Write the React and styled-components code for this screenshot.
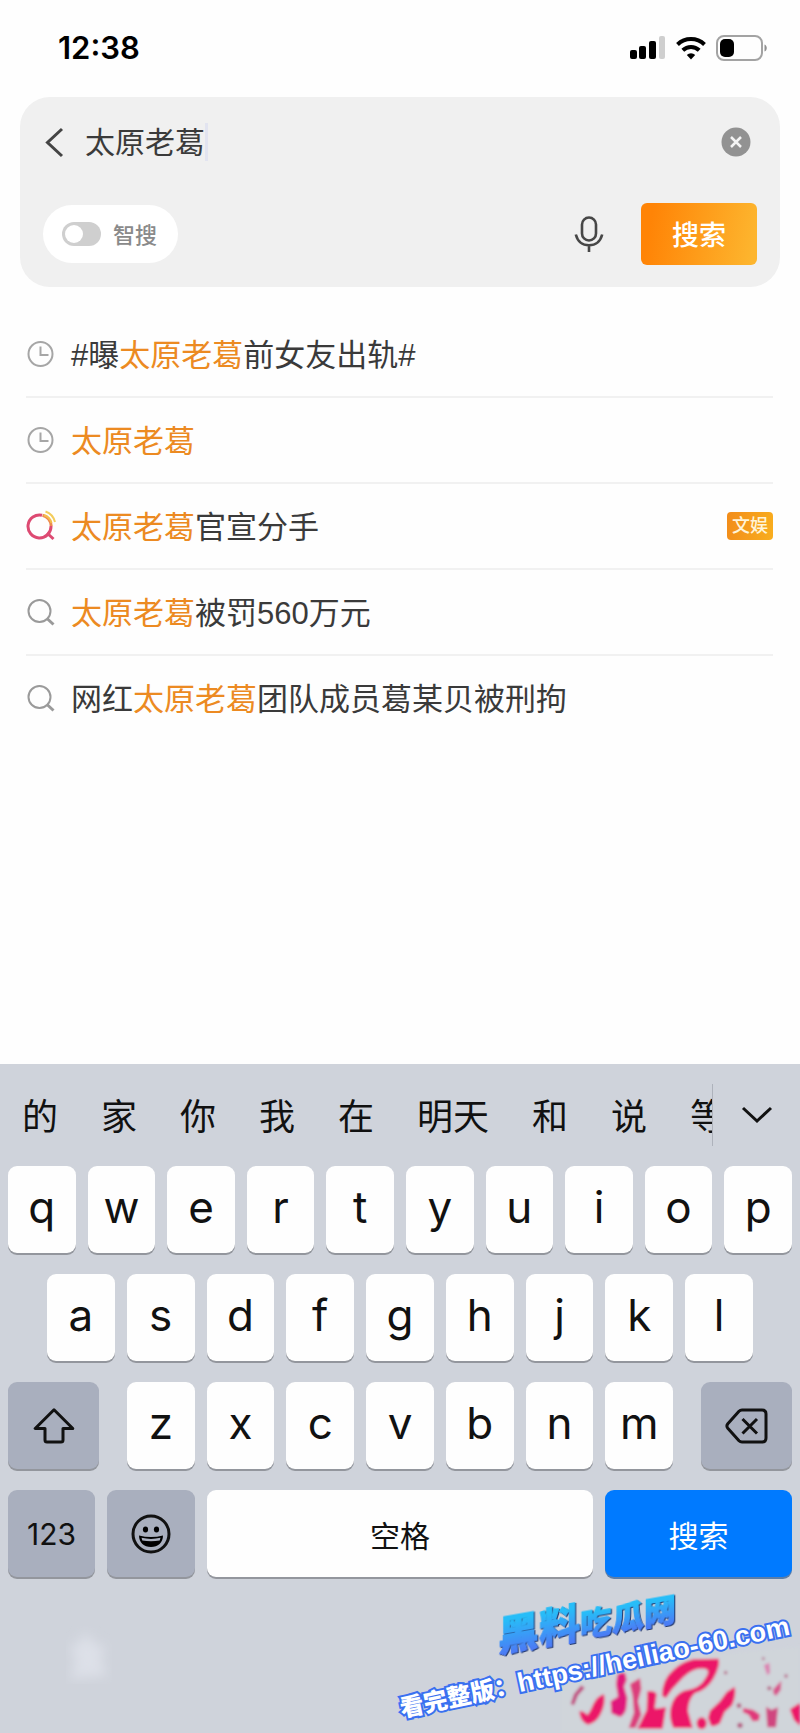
import { useState } from 'react';
import styled, { createGlobalStyle } from 'styled-components';

const GlobalStyle = createGlobalStyle`
  * {
    box-sizing: border-box;
  }

  body {
    margin: 0;
    background: #fefefe;
    color: #3a3a3a;
    font-family: Inter, 'Noto Sans CJK SC', sans-serif;
  }

  button,
  input {
    margin: 0;
    padding: 0;
    border: none;
    background: none;
    color: inherit;
    font: inherit;
  }

  button {
    cursor: pointer;
  }

  svg {
    display: block;
    flex-shrink: 0;
  }
`;

const Page = styled.div`
  display: flex;
  flex-direction: column;
  min-height: 100vh;
`;

const StatusBar = styled.header`
  display: flex;
  align-items: center;
  justify-content: space-between;
  height: 97px;
  padding: 0 32px 2px 58px;
  color: #000;
`;

const Time = styled.time`
  font-size: 31px;
  font-weight: 600;
`;

const StatusIcons = styled.div`
  display: flex;
  align-items: center;
  gap: 10px;
`;

const SearchCard = styled.form`
  display: flex;
  flex-direction: column;
  justify-content: space-between;
  height: 190px;
  margin: 0 20px;
  padding: 20px 23px 22px;
  border-radius: 30px;
  background: #f0f0f0;
`;

const CardRow = styled.div`
  display: flex;
  align-items: center;
`;

const BackButton = styled.button`
  width: 42px;
`;

const SearchInput = styled.input`
  field-sizing: content;
  min-width: 30px;
  height: 50px;
  padding-bottom: 4px;
  outline: none;
  font-size: 30px;
`;

const Caret = styled.span`
  width: 3px;
  height: 38px;
  background: #e2e4f0;
`;

const ClearButton = styled.button`
  margin: 0 6px 0 auto;
`;

const SmartToggle = styled.label`
  display: flex;
  align-items: center;
  gap: 12px;
  height: 58px;
  padding: 0 21px 0 19px;
  border-radius: 29px;
  background: #fff;
  color: #8a8a8a;
  font-size: 22px;
  font-weight: 500;
`;

const SmartLabel = styled.span`
  padding-bottom: 3px;
`;

const Switch = styled.input`
  appearance: none;
  display: flex;
  align-items: center;
  width: 39px;
  height: 24px;
  padding: 0 3px;
  border-radius: 12px;
  background: #cfcfcf;

  &::before {
    content: '';
    width: 18px;
    height: 18px;
    border-radius: 50%;
    background: #fff;
  }

  &:checked {
    justify-content: flex-end;
    background: #ff8a0c;
  }
`;

const MicButton = styled.button`
  margin: 0 37px 0 auto;
`;

const SubmitButton = styled.button`
  width: 116px;
  height: 62px;
  padding-bottom: 2px;
  border-radius: 6px;
  background: linear-gradient(100deg, #ff8406 10%, #fdb52e 95%);
  color: #fff;
  font-size: 27px;
  font-weight: 500;
`;

const List = styled.ul`
  flex: 1;
  margin: 0;
  padding: 25px 27px 0 26px;
  list-style: none;
`;

const Item = styled.li`
  &:not(:last-child) {
    border-bottom: 2px solid #f1f1f1;
  }
`;

const Suggestion = styled.button`
  display: flex;
  align-items: center;
  width: 100%;
  height: 84px;
  font-family: 'Liberation Sans', 'Noto Sans CJK SC', sans-serif;
  font-size: 31px;
  text-align: left;
  white-space: nowrap;
`;

const IconSlot = styled.span`
  width: 45px;
`;

const SuggestionText = styled.span`
  padding-bottom: 4px;
`;

const Mark = styled.em`
  color: #ec8a22;
  font-style: normal;
`;

const Tag = styled.span`
  margin-left: auto;
  padding: 0 5px;
  border-radius: 4px;
  background: linear-gradient(100deg, #f28c1a, #f9ae1e);
  color: #fff4d8;
  font-size: 18px;
  font-weight: 500;
  line-height: 28px;
`;

const Keyboard = styled.section`
  position: relative;
  padding-bottom: 156px;
  overflow: hidden;
  background: #cfd3db;
  color: #111;
`;

const CandidateBar = styled.div`
  display: flex;
  align-items: center;
  height: 102px;
`;

const Candidates = styled.div`
  display: flex;
  flex: 1;
  align-items: center;
  gap: 43px;
  min-width: 0;
  height: 62px;
  padding: 0 0 2px 22px;
  border-right: 1px solid #aeb2bb;
  overflow: hidden;
`;

const Candidate = styled.button`
  flex-shrink: 0;
  font-size: 36px;
`;

const ExpandButton = styled.button`
  display: flex;
  justify-content: center;
  width: 87px;
`;

const Keys = styled.div`
  display: flex;
  flex-direction: column;
  gap: 21px;
`;

const KeyRow = styled.div`
  display: flex;
  gap: ${({ $gap = 12 }) => $gap}px;
  padding: 0 ${({ $inset = 8 }) => $inset}px;
`;

const LetterGroup = styled.div`
  display: flex;
  flex: 1;
  gap: 12px;
`;

const Key = styled.button`
  display: flex;
  flex: ${({ $width }) => ($width ? `0 0 ${$width}px` : '1 1 0')};
  align-items: center;
  justify-content: center;
  min-width: 0;
  height: 87px;
  border-radius: 9px;
  background: #fefefe;
  box-shadow: 0 2px 0 #93969d;
  font-size: 30px;
`;

const LetterKey = styled(Key)`
  padding-bottom: 6px;
  font-size: 44px;
`;

const GreyKey = styled(Key)`
  background: #a9afbe;
`;

const BlueKey = styled(Key)`
  background: #007aff;
  box-shadow: 0 2px 0 #5c7ea8;
  color: #fff;
`;

const Smudge = styled.svg`
  position: absolute;
  bottom: 40px;
  left: 50px;
`;

const Splash = styled.svg`
  position: absolute;
  right: 0;
  bottom: 0;
`;

const Brand = styled.div`
  position: absolute;
  right: 124px;
  bottom: 86px;
  transform: skewY(-10deg);
  filter: drop-shadow(1px 1px 0 #22376b);
  white-space: nowrap;
`;

const BrandText = styled.span`
  background: linear-gradient(#27bdf8 20%, #4b7cf5 85%);
  background-clip: text;
  color: transparent;
  font-size: ${({ $size }) => $size}px;
  font-weight: 900;
  line-height: 44px;
  -webkit-text-stroke: 1px transparent;
`;

const SiteLink = styled.a`
  position: absolute;
  right: 6px;
  bottom: 47px;
  transform: rotate(-12deg);
  color: #fff;
  font-family: 'Liberation Sans', 'Noto Sans CJK SC', sans-serif;
  font-size: 27px;
  font-weight: 700;
  line-height: 36px;
  text-decoration: none;
  white-space: nowrap;
  paint-order: stroke fill;
  -webkit-text-stroke: 4px #3a70f0;
`;

const LinkLabel = styled.span`
  font-size: 24px;
  font-weight: 900;
`;

function SignalIcon() {
  return (
    <svg width="36" height="24" viewBox="0 0 36 24">
      <rect x="0" y="14" width="7" height="9" rx="2" />
      <rect x="9" y="10" width="7" height="13" rx="2" />
      <rect x="19" y="5" width="7" height="18" rx="2" />
      <rect x="29" y="0" width="6" height="23" rx="2" fill="#cfcfcf" />
    </svg>
  );
}

function WifiIcon() {
  return (
    <svg width="30" height="24" viewBox="0 0 30 24">
      <g fill="none" stroke="#000" strokeWidth="4">
        <path d="M1.5 8.5a19.5 19.5 0 0 1 27 0" />
        <path d="M6.8 14.2a11.8 11.8 0 0 1 16.4 0" />
      </g>
      <path d="M15 23.4l-4.2-4.4a6 6 0 0 1 8.4 0z" />
    </svg>
  );
}

function BatteryIcon() {
  return (
    <svg width="52" height="26" viewBox="0 0 52 26">
      <rect
        x="1"
        y="1"
        width="45"
        height="24"
        rx="7"
        fill="none"
        stroke="#a3a3a3"
        strokeWidth="2"
      />
      <rect x="4" y="4" width="14" height="18" rx="5" />
      <path d="M48.5 9.5c3 1 3 6 0 7z" fill="#8f8f8f" />
    </svg>
  );
}

function ClockIcon() {
  return (
    <svg width="30" height="28" viewBox="0 0 30 28" fill="none" stroke="#a6a6a6" strokeWidth="2">
      <circle cx="14.5" cy="14" r="12" />
      <path d="M14.5 6.500V15h8" />
    </svg>
  );
}

function SearchIcon() {
  return (
    <svg width="30" height="30" viewBox="0 0 30 30" fill="none" stroke="#9a9a9a" strokeWidth="2">
      <circle cx="13.5" cy="14" r="11" />
      <path d="M21 21.5l6.500 6" strokeWidth="3" />
    </svg>
  );
}

function HotSearchIcon() {
  return (
    <svg width="32" height="32" viewBox="0 0 32 32" fill="none" strokeWidth="3">
      <path d="M16 5.2A11.5 11.5 0 1 0 25 16" stroke="#dd4a72" />
      <path d="M21 23l6.500 6" stroke="#dd4a72" />
      <path d="M16.5 5.2A11.5 11.5 0 0 1 25.2 16" stroke="#ee8a4e" />
      <path d="M19.5 1.5a15 15 0 0 1 9.5 10.5" stroke="#f3cd5c" strokeWidth="2" />
      <path d="M18 5a11.5 11.5 0 0 1 7.5 8" stroke="#f3bd4c" strokeWidth="2" />
    </svg>
  );
}

function MicIcon() {
  return (
    <svg width="30" height="37" viewBox="0 0 30 37" fill="none" stroke="#474747" strokeWidth="2.6">
      <rect x="8" y="1.5" width="14" height="23" rx="7" />
      <path d="M1.8 18.5c2 7.5 7 10.8 13.2 10.8s11.2-3.3 13.2-10.8M15 29.5V36" />
    </svg>
  );
}

function ShiftIcon() {
  return (
    <svg width="42" height="36" viewBox="0 0 42 36" fill="none" stroke="#111" strokeWidth="3" strokeLinejoin="round">
      <path d="M21 1.8L2.2 20.5H12V32q0 2 2 2h14q2 0 2-2V20.5h9.8z" />
    </svg>
  );
}

function DeleteIcon() {
  return (
    <svg width="43" height="36" viewBox="0 0 43 36" fill="none" stroke="#111" strokeWidth="3" strokeLinejoin="round">
      <path d="M17 2h20q4 0 4 4v24q0 4-4 4H17q-1.8 0-3-1.2L2.8 20.2q-1.8-2.2 0-4.4L14 3.2Q15.2 2 17 2z" />
      <path d="M17.5 11L32 25.5M32 11L17.5 25.5" />
    </svg>
  );
}

function EmojiIcon() {
  return (
    <svg width="40" height="40" viewBox="0 0 40 40">
      <circle cx="20" cy="20" r="18" fill="none" stroke="#111" strokeWidth="3" />
      <ellipse cx="14.5" cy="15.5" rx="2.6" ry="3" />
      <ellipse cx="25.5" cy="15.5" rx="2.6" ry="3" />
      <path d="M8 21.5q12 3 24 0c0 7-5 11.5-12 11.5S8 28.500 8 21.5z" />
      <path d="M10.5 23.8q9.5 2.200 19 0l-.8 2.600q-8.700 1.600-17.400 0z" fill="#a9afbe" />
    </svg>
  );
}

function PaintSplash() {
  return (
    <Splash width="240" height="93" viewBox="0 0 720 279">
      <defs>
        <filter id="soft">
          <feGaussianBlur stdDeviation="4" />
        </filter>
      </defs>
      <g filter="url(#soft)" fill="#ec1468">
        <path d="M0 130L300 60 720 20V279H0z" fill="#d0d5da" opacity=".7" />
        <path d="M32 192l10-30 22-26 10 8-20 22-12 30z" fill="#c0497f" />
        <path d="M58 214q14-2 24 12 10-12 18-34 12-24 32-30 6 30-10 60-12 26-38 32-24-8-26-40z" />
        <path d="M172 104q14-10 24-4l4 20-8 20 10 34-4 36q-10 22-20 20l-24-10-2-36 22-14-6-38z" fill="#e0187c" />
        <path d="M210 132l30-18 4 32-10 38 10 40-18 40h-20l16-46-4-50z" fill="#dc3c7c" />
        <path d="M262 154q20-4 28 8l-6 44 34-4-10 64h-76l28-56z" />
        <path
          d="M306 168q0-50 34-78 24-24 60-32l76-2q6 20-16 60-20 34-56 44-20 20-20 54l14 50h-58q-14-30-8-60 8-40 40-52 48-4 66-40 14-24-4-26-34-4-64 26l-34 36-18 26z"
        />
        <path d="M450 212l30-28 20-28 24-16q6 24-8 56l-22 20-14 34q-18 14-28 6l-8-22z" />
        <ellipse cx="425" cy="250" rx="15" ry="18" />
        <path d="M550 204l30 6 20 14-4 18-18 2-12-20-18-8z" fill="#e0397a" />
        <path d="M640 148l24-26-2 28-14 18-8-8z" fill="#d8518a" />
        <path d="M618 200l16 10 20-8-6 60h-26z" fill="#d0457f" />
        <path d="M690 208l30-20v70l-18-18z" />
        <path d="M612 76l16-8 2 30-8 8z" fill="#dc7fb0" />
        <g fill="#b4567f">
          <circle cx="497" cy="98" r="5" />
          <circle cx="678" cy="108" r="5" />
          <circle cx="628" cy="145" r="6" />
          <circle cx="537" cy="197" r="7" />
          <circle cx="610" cy="56" r="4" />
          <circle cx="540" cy="256" r="8" />
          <circle cx="222" cy="84" r="6" />
        </g>
      </g>
    </Splash>
  );
}

const KEYWORD = '太原老葛';

const suggestions = [
  { icon: ClockIcon, before: '#曝', after: '前女友出轨#' },
  { icon: ClockIcon },
  { icon: HotSearchIcon, after: '官宣分手', tag: '文娱' },
  { icon: SearchIcon, after: '被罚560万元' },
  { icon: SearchIcon, before: '网红', after: '团队成员葛某贝被刑拘' }
];

const candidates = ['的', '家', '你', '我', '在', '明天', '和', '说', '等'];

function Letters({ letters, onType }) {
  return letters.split('').map((letter) => (
    <LetterKey key={letter} type="button" onClick={() => onType(letter)}>
      {letter}
    </LetterKey>
  ));
}

function App() {
  const [query, setQuery] = useState(KEYWORD);
  const [isSmart, setIsSmart] = useState(false);

  function handleType(text) {
    setQuery((value) => value + text);
  }

  return (
    <>
      <GlobalStyle />
      <Page>
        <StatusBar>
          <Time>12:38</Time>
          <StatusIcons>
            <SignalIcon />
            <WifiIcon />
            <BatteryIcon />
          </StatusIcons>
        </StatusBar>

        <SearchCard onSubmit={(e) => e.preventDefault()}>
          <CardRow>
            <BackButton type="button" aria-label="返回">
              <svg width="22" height="32" viewBox="0 0 22 32" fill="none" stroke="#444" strokeWidth="3">
                <path d="M19 3L4.5 16.5 19 30" />
              </svg>
            </BackButton>
            <SearchInput
              aria-label="搜索内容"
              value={query}
              onChange={(e) => setQuery(e.target.value)}
            />
            <Caret />
            <ClearButton type="button" aria-label="清除" onClick={() => setQuery('')}>
              <svg width="30" height="30" viewBox="0 0 30 30">
                <circle cx="15" cy="15" r="14.5" fill="#929292" />
                <path d="M10 10l10 10M20 10L10 20" stroke="#f4f4f4" strokeWidth="2.5" />
              </svg>
            </ClearButton>
          </CardRow>
          <CardRow>
            <SmartToggle>
              <Switch
                type="checkbox"
                checked={isSmart}
                onChange={() => setIsSmart((smart) => !smart)}
              />
              <SmartLabel>智搜</SmartLabel>
            </SmartToggle>
            <MicButton type="button" aria-label="语音输入">
              <MicIcon />
            </MicButton>
            <SubmitButton type="submit">搜索</SubmitButton>
          </CardRow>
        </SearchCard>

        <List>
          {suggestions.map(({ icon: Icon, before = '', after = '', tag }) => (
            <Item key={before + after}>
              <Suggestion
                type="button"
                onClick={() => setQuery(before + KEYWORD + after)}
              >
                <IconSlot>
                  <Icon />
                </IconSlot>
                <SuggestionText>
                  {before}
                  <Mark>{KEYWORD}</Mark>
                  {after}
                </SuggestionText>
                {tag && <Tag>{tag}</Tag>}
              </Suggestion>
            </Item>
          ))}
        </List>

        <Keyboard>
          <CandidateBar>
            <Candidates>
              {candidates.map((word) => (
                <Candidate key={word} type="button" onClick={() => handleType(word)}>
                  {word}
                </Candidate>
              ))}
            </Candidates>
            <ExpandButton type="button" aria-label="展开">
              <svg width="32" height="20" viewBox="0 0 32 20" fill="none" stroke="#111" strokeWidth="3">
                <path d="M2 3l14 13L30 3" />
              </svg>
            </ExpandButton>
          </CandidateBar>

          <Keys>
            <KeyRow>
              <Letters letters="qwertyuiop" onType={handleType} />
            </KeyRow>
            <KeyRow $inset={47}>
              <Letters letters="asdfghjkl" onType={handleType} />
            </KeyRow>
            <KeyRow $gap={28}>
              <GreyKey type="button" $width={91} aria-label="大写">
                <ShiftIcon />
              </GreyKey>
              <LetterGroup>
                <Letters letters="zxcvbnm" onType={handleType} />
              </LetterGroup>
              <GreyKey
                type="button"
                $width={91}
                aria-label="删除"
                onClick={() => setQuery((value) => value.slice(0, -1))}
              >
                <DeleteIcon />
              </GreyKey>
            </KeyRow>
            <KeyRow>
              <GreyKey type="button" $width={87}>
                123
              </GreyKey>
              <GreyKey type="button" $width={88} aria-label="表情">
                <EmojiIcon />
              </GreyKey>
              <Key type="button" onClick={() => handleType(' ')}>
                空格
              </Key>
              <BlueKey type="button" $width={187}>
                搜索
              </BlueKey>
            </KeyRow>
          </Keys>

          <Smudge width="76" height="76" viewBox="0 0 76 76">
            <filter id="haze">
              <feGaussianBlur stdDeviation="6" />
            </filter>
            <path
              d="M34 14l10 12 12 6-6 10 8 16-20 2-18 2 6-18-6-14 12-6z"
              fill="#dde0e8"
              filter="url(#haze)"
            />
          </Smudge>
          <PaintSplash />
          <Brand>
            <BrandText $size={41}>黑料</BrandText>
            <BrandText $size={32}>吃瓜网</BrandText>
          </Brand>
          <SiteLink href="https://heiliao-60.com">
            <LinkLabel>看完整版：</LinkLabel>
            https://heiliao-60.com
          </SiteLink>
        </Keyboard>
      </Page>
    </>
  );
}

export default App;
